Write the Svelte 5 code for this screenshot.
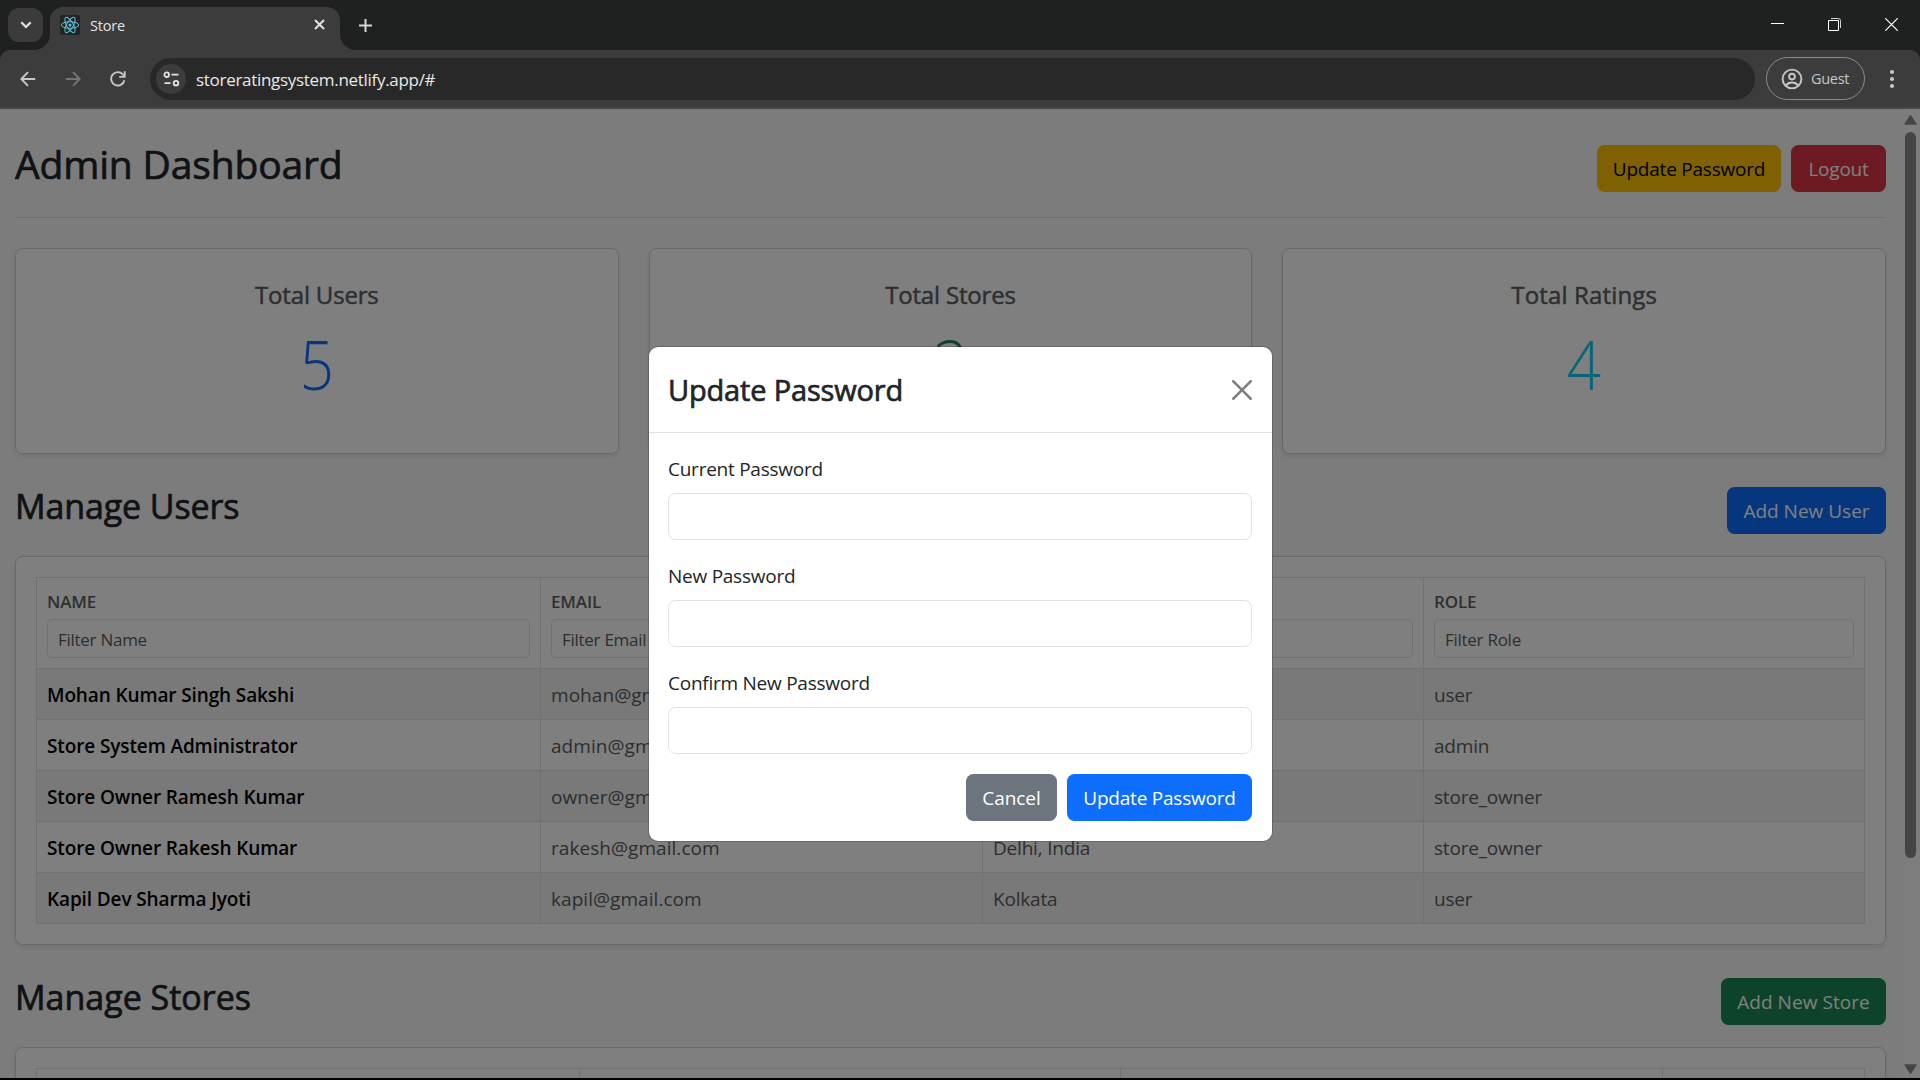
<script>
  const stats = [
    { label: 'Total Users', value: 5, tone: 'blue' },
    { label: 'Total Stores', value: 3, tone: 'green' },
    { label: 'Total Ratings', value: 4, tone: 'cyan' }
  ];
  const columns = [
    { head: 'NAME', hint: 'Filter Name' },
    { head: 'EMAIL', hint: 'Filter Email' },
    { head: '', hint: '' },
    { head: 'ROLE', hint: 'Filter Role' }
  ];
  const users = [
    ['Mohan Kumar Singh Sakshi', 'mohan@gmail.com', '', 'user'],
    ['Store System Administrator', 'admin@gmail.com', '', 'admin'],
    ['Store Owner Ramesh Kumar', 'owner@gmail.com', '', 'store_owner'],
    ['Store Owner Rakesh Kumar', 'rakesh@gmail.com', 'Delhi, India', 'store_owner'],
    ['Kapil Dev Sharma Jyoti', 'kapil@gmail.com', 'Kolkata', 'user']
  ];
  const fields = ['Current Password', 'New Password', 'Confirm New Password'];
</script>

<div class="browser">
  <div class="strip">
    <div class="tabsearch">
      <svg width="12" height="8" viewBox="0 0 12 8"><path d="M1.3 1.3 6 6l4.7-4.7" fill="none" stroke="#e3e3e3" stroke-width="2.2" /></svg>
    </div>
    <div class="tab">
      <svg class="flare left" width="16" height="16" viewBox="0 0 16 16"><path d="M16 0A16 16 0 0 1 0 16H16Z" fill="#3c3c3c" /></svg>
      <svg class="flare right" width="16" height="16" viewBox="0 0 16 16"><path d="M0 0A16 16 0 0 0 16 16H0Z" fill="#3c3c3c" /></svg>
      <svg class="fav" width="20" height="20" viewBox="0 0 20 20">
        <rect width="20" height="20" rx="2.5" fill="#242424" />
        <g fill="none" stroke="#58c4dc" stroke-width="1">
          <ellipse cx="10" cy="10" rx="8.6" ry="3.3" />
          <ellipse cx="10" cy="10" rx="8.6" ry="3.3" transform="rotate(60 10 10)" />
          <ellipse cx="10" cy="10" rx="8.6" ry="3.3" transform="rotate(120 10 10)" />
        </g>
        <circle cx="10" cy="10" r="1.5" fill="#58c4dc" />
      </svg>
      <span class="tabname">Store</span>
      <svg class="tabclose" width="11" height="11" viewBox="0 0 11 11"><path d="M1 1l9 9M10 1l-9 9" stroke="#e3e3e3" stroke-width="2" /></svg>
    </div>
    <svg class="plus" width="13" height="13" viewBox="0 0 13 13"><path d="M6.5 0v13M0 6.5h13" stroke="#d5d5d5" stroke-width="2" /></svg>
    <div class="winctl">
      <svg width="13" height="13" viewBox="0 0 13 13"><path d="M0 5.5h13" stroke="#fff" /></svg>
      <svg width="13" height="13" viewBox="0 0 13 13"><path d="M.5 2.5h10v10H.5z" fill="none" stroke="#fff" /><path d="M3 .5h7.5q2 0 2 2V10" fill="none" stroke="#d0d0d0" /></svg>
      <svg width="13" height="13" viewBox="0 0 13 13"><path d="M.3.3l12.4 12.4M12.7.3.3 12.7" stroke="#fff" stroke-width="1.2" /></svg>
    </div>
  </div>
  <div class="toolbar">
    <div class="nav">
      <svg width="16" height="16" viewBox="0 0 16 16"><path d="M15.2 8H1.8M8 1.2 1.3 8 8 14.8" fill="none" stroke="#c7c7c7" stroke-width="1.9" /></svg>
      <svg width="16" height="16" viewBox="0 0 16 16"><path d="M.8 8h13.4M8 1.2 14.7 8 8 14.8" fill="none" stroke="#757575" stroke-width="1.9" /></svg>
      <svg width="16" height="16" viewBox="0 0 16 16"><path d="M14.4 9.3A6.7 6.7 0 1 1 12.8 3.3L14.6 5.2" fill="none" stroke="#c7c7c7" stroke-width="1.9" /><path d="M14.7 .3v5.6H9.2" fill="none" stroke="#c7c7c7" stroke-width="1.9" /></svg>
    </div>
    <div class="omni">
      <span class="site">
        <svg width="17" height="16" viewBox="0 0 17 16" fill="none" stroke="#e3e3e3" stroke-width="1.8"><circle cx="3.7" cy="3.7" r="2.3" /><path d="M8.5 3.7h7M1.5 12.2h6" /><circle cx="13" cy="12.2" r="2.3" /></svg>
      </span>
      <span class="url">storeratingsystem.netlify.app/#</span>
    </div>
    <div class="guest">
      <svg width="22" height="22" viewBox="0 0 22 22" fill="none" stroke="#c7c7c7" stroke-width="1.9"><circle cx="11" cy="11" r="9.4" /><circle cx="11" cy="8.6" r="2.9" /><path d="M4.8 17.6c1.6-2.2 3.7-3.1 6.2-3.1s4.6.9 6.2 3.1" /></svg>
      <span>Guest</span>
    </div>
    <svg class="dots" width="6" height="20" viewBox="0 0 6 20" fill="#c7c7c7"><circle cx="3" cy="3" r="2.1" /><circle cx="3" cy="10" r="2.1" /><circle cx="3" cy="17" r="2.1" /></svg>
  </div>

  <div class="viewport">
    <main>
      <header>
        <h1>Admin Dashboard</h1>
        <div class="actions">
          <button class="btn yellow up">Update Password</button>
          <button class="btn red logout">Logout</button>
        </div>
      </header>
      <section class="stats">
        {#each stats as s}
          <div class="card stat">
            <h5 class={s.tone + '-label'}>{s.label}</h5>
            <p class={s.tone}>{s.value}</p>
          </div>
        {/each}
      </section>
      <div class="sec">
        <h2>Manage Users</h2>
        <button class="btn primary adduser">Add New User</button>
      </div>
      <div class="card tbl">
        <table>
          <colgroup><col class="c1" /><col class="c2" /><col class="c3" /><col /></colgroup>
          <thead>
            <tr>
              {#each columns as c}
                <th><span>{c.head}</span><input placeholder={c.hint} /></th>
              {/each}
            </tr>
          </thead>
          <tbody>
            {#each users as row}
              <tr>
                {#each row as cell}<td>{cell}</td>{/each}
              </tr>
            {/each}
          </tbody>
        </table>
      </div>
      <div class="sec">
        <h2 class="st">Manage Stores</h2>
        <button class="btn success addstore">Add New Store</button>
      </div>
      <div class="card tbl stores">
        <table>
          <colgroup><col class="s1" /><col class="s2" /><col class="s3" /><col /></colgroup>
          <thead><tr><th></th><th></th><th></th><th></th></tr></thead>
        </table>
      </div>
    </main>
    <div class="scroll">
      <svg width="13" height="10" viewBox="0 0 13 10"><path d="M6.5 1 11.8 9H1.2Z" fill="#8b8b8b" stroke="#8b8b8b" stroke-width="1.6" stroke-linejoin="round" /></svg>
      <div class="thumb"></div>
      <svg class="dn" width="13" height="10" viewBox="0 0 13 10"><path d="M6.5 9 11.8 1H1.2Z" fill="#8b8b8b" stroke="#8b8b8b" stroke-width="1.6" stroke-linejoin="round" /></svg>
    </div>
    <div class="backdrop">
      <div class="modal">
        <div class="mhead">
          <h4>Update Password</h4>
          <svg width="20" height="20" viewBox="0 0 16 16" fill="#7f7f7f"><path d="M.293.293a1 1 0 0 1 1.414 0L8 6.586 14.293.293a1 1 0 1 1 1.414 1.414L9.414 8l6.293 6.293a1 1 0 0 1-1.414 1.414L8 9.414l-6.293 6.293a1 1 0 0 1-1.414-1.414L6.586 8 .293 1.707a1 1 0 0 1 0-1.414" /></svg>
        </div>
        <div class="mbody">
          {#each fields as f}
            <label><span>{f}</span><input type="password" /></label>
          {/each}
          <div class="foot">
            <button class="btn gray cancel">Cancel</button>
            <button class="btn primary up2">Update Password</button>
          </div>
        </div>
      </div>
    </div>
  </div>
</div>

<style>
  :global(body) { margin: 0; background: #000; overflow: hidden; }
  .browser, .browser * { box-sizing: border-box; }
  .browser {
    width: 1920px; height: 1080px; overflow: hidden; background: #000;
    display: flex; flex-direction: column;
    font-family: "Open Sans", "Noto Sans", sans-serif; font-size: 19px; color: #212529;
  }
  svg { display: block; flex: none; }

  .strip { height: 50px; flex: none; background: #1f2120; display: flex; align-items: flex-start; padding-left: 8px; }
  .tabsearch { width: 35px; height: 34px; margin-top: 8px; border-radius: 11px; background: #3a3b3a; display: flex; align-items: center; justify-content: center; }
  .tab { position: relative; width: 290px; height: 43px; margin: 7px 0 0 7px; padding: 0 15px 8px 10px; background: #3c3c3c; border-radius: 13px 13px 0 0; display: flex; align-items: center; }
  .flare { position: absolute; bottom: 0; }
  .left { left: -16px; }
  .right { right: -16px; }
  .tabname { margin-left: 10px; padding-top: 1px; flex: 1; font-size: 14.5px; letter-spacing: -.2px; color: #e3e3e3; }
  .plus { margin: 19px 0 0 19px; }
  .winctl { margin: 18px 22px 0 auto; display: flex; gap: 44px; }

  .toolbar { height: 59px; flex: none; background: #3c3c3c; border-bottom: 2px solid #494949; display: flex; align-items: center; padding: 0 25px 0 20px; border-radius: 10px 10px 0 0; box-shadow: 0 -12px 0 #1f2120; clip-path: inset(0); }
  .nav { display: flex; gap: 29px; }
  .omni { margin-left: 24px; width: 1605px; height: 42px; border-radius: 21px; background: #282828; display: flex; align-items: center; padding-left: 6px; }
  .site { width: 30px; height: 30px; border-radius: 50%; background: #3c3c3c; display: flex; align-items: center; justify-content: center; }
  .url { margin-left: 10px; padding-top: 2px; font-size: 17px; letter-spacing: -.3px; color: #e8e8e8; }
  .guest { margin-left: 11px; width: 99px; height: 43px; border: 1px solid #8c8c8c; border-radius: 22px; display: flex; align-items: center; padding-left: 14px; gap: 8px; font-size: 14.5px; letter-spacing: -.3px; color: #c7c7c7; }
  .dots { margin-left: auto; }

  .viewport { position: relative; height: 969px; flex: none; overflow: hidden; background: #f8f9fa; display: flex; }
  main { width: 1901px; padding: 36px 15px 0; }
  header { display: flex; justify-content: space-between; align-items: flex-start; height: 73px; border-bottom: 1px solid #e0e1e2; }
  h1, h2, h4, h5, p { margin: 0; font-weight: 400; }
  /* Open Sans has no medium cut here, so a thin stroke stands in for it. */
  h1, h2, h4, h5 { -webkit-text-stroke: .7px currentColor; }
  h5 { -webkit-text-stroke-width: .5px; }
  h1 { margin-top: -5px; font-size: 39px; line-height: 48px; letter-spacing: -.15px; }
  .actions { display: flex; gap: 10px; }
  .btn { height: 47px; border: 0; border-radius: 7.5px; padding: 2px 0 0; font: 400 19px/45px "Open Sans", "Noto Sans", sans-serif; letter-spacing: -.22px; color: #fff; text-align: center; white-space: nowrap; }
  .yellow { background: #ffc107; color: #000; }
  .red { background: #dc3545; }
  .primary { background: #0d6efd; }
  .success { background: #198754; }
  .gray { background: #6c757d; }
  .up { width: 184px; }
  .logout { width: 95px; }
  .adduser { width: 159px; letter-spacing: 0; }
  .addstore { width: 165px; letter-spacing: .05px; }
  .cancel { width: 91px; letter-spacing: -.05px; }
  .up2 { width: 185px; }

  .card { background: #fff; border: 1px solid #d2d3d4; border-radius: 7.5px; box-shadow: 0 2.5px 5px rgba(0, 0, 0, .075); }
  .stats { margin-top: 30px; display: grid; grid-template-columns: repeat(3, 1fr); gap: 30px; }
  .stat { height: 206px; padding-top: 31px; text-align: center; }
  h5 { font-size: 24px; line-height: 30px; letter-spacing: -.18px; color: #5c5f62; }
  .cyan-label { letter-spacing: .15px; }
  .stat p { margin-top: 11px; font-size: 69px; line-height: 84px; font-weight: 300; transform: scaleX(.87); }
  .blue { color: #0d6efd; }
  .green { color: #198754; }
  .cyan { color: #0dcaf0; }

  .sec { display: flex; justify-content: space-between; align-items: flex-start; height: 47px; margin: 33px 0 22px; }
  h2 { margin-top: -2px; font-size: 34px; line-height: 42px; letter-spacing: -.12px; }
  .st { letter-spacing: 0; }

  .tbl { height: 389px; padding: 20px; }
  table { width: 1829px; border-collapse: collapse; table-layout: fixed; }
  .c1 { width: 504px; }
  .c2 { width: 442px; }
  .c3 { width: 441px; }
  .s1 { width: 543px; }
  .s2 { width: 541px; }
  .s3 { width: 542px; }
  th, td { border: 1px solid #dee2e6; padding: 0 10px; text-align: left; }
  th { height: 91px; vertical-align: top; padding-top: 10px; font-weight: 600; font-size: 17px; line-height: 27px; letter-spacing: -.15px; color: #5c5f62; }
  th span { display: block; height: 27px; }
  input { display: block; width: 100%; border: 1px solid #dee2e6; background: #fff; font: 400 17px/25px "Open Sans", "Noto Sans", sans-serif; }
  th input { height: 39px; margin-top: 4px; padding: 2px 10px 0; border-radius: 5px; letter-spacing: -.27px; }
  input::placeholder { color: #595c5f; opacity: 1; }
  td { height: 51px; padding-top: 2px; color: #595c5f; letter-spacing: -.2px; line-height: 30px; white-space: nowrap; }
  td:first-child { font-weight: 600; color: #000; letter-spacing: -.12px; }
  td:nth-child(2) { letter-spacing: .05px; }
  tbody tr:nth-child(odd) { background: #f2f2f2; }

  .scroll { width: 19px; background: #fbfbfb; display: flex; flex-direction: column; align-items: center; padding: 6px 0 4px; }
  .thumb { width: 11px; height: 726px; margin-top: 7px; border-radius: 6px; background: #8b8b8b; }
  .dn { margin-top: auto; }

  .backdrop { position: absolute; inset: 0; background: rgba(0, 0, 0, .5); display: flex; justify-content: center; align-items: flex-start; padding-top: 237px; }
  .modal { width: 625px; height: 496px; margin-left: 1px; background: #fff; background-clip: padding-box; border: 1px solid rgba(0, 0, 0, .175); border-radius: 10px; }
  .mhead { height: 86px; padding: 0 20px 0 19px; border-bottom: 1px solid #dee2e6; display: flex; align-items: center; justify-content: space-between; }
  h4 { font-size: 29px; line-height: 45px; letter-spacing: -.17px; }
  .mbody { padding: 20px 20px 0 19px; }
  label { display: block; line-height: 30px; margin-bottom: 20px; letter-spacing: -.25px; }
  label span { display: block; height: 30px; padding-top: 1px; }
  label input { height: 47px; margin-top: 10px; border-radius: 7.5px; }
  .foot { display: flex; justify-content: flex-end; gap: 10px; }
</style>
